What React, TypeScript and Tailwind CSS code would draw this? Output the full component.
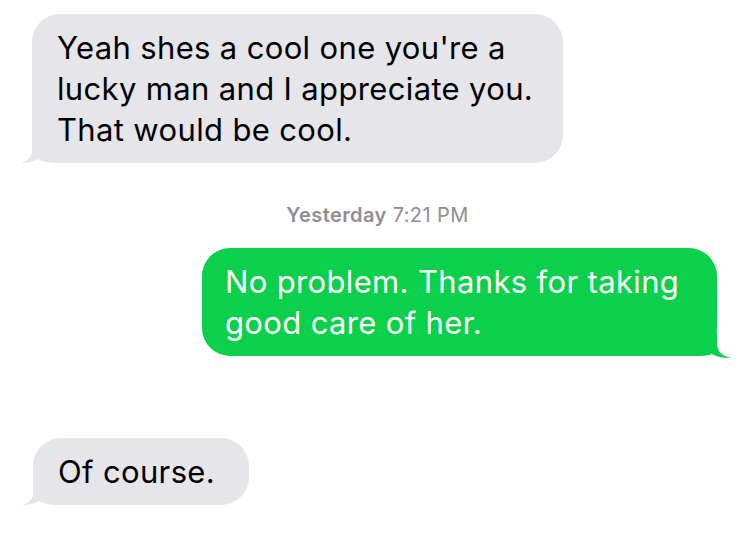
import React from 'react';

const gray = '#e5e5ea';
const green = '#0bd04b';

const TailLeft = ({ color }: { color: string }) => (
	<svg
		className="absolute left-[-13px] bottom-0"
		width="44"
		height="24"
		viewBox="0 0 44 24"
	>
		<path
			d="M13 0 L13 12 C13 18 9 22 1 24 C7 24 13 23 19 20 C24 23 30 24 44 24 L44 0 Z"
			fill={color}
		/>
	</svg>
);

const TailRight = ({ color }: { color: string }) => (
	<svg
		className="absolute right-[-18px] bottom-[-2px]"
		width="44"
		height="26"
		viewBox="0 0 44 26"
	>
		<path
			d="M26 0 L26 12 C26 19 31 24 40 26 C32 26 26 25 21 22 C16 24 10 24 0 24 L0 0 Z"
			fill={color}
		/>
	</svg>
);

export default function App() {
	return (
		<div className="w-[750px] h-[533px] bg-white overflow-hidden flex flex-col pt-[14px] font-['Inter',sans-serif] antialiased">
			{/* received */}
			<div className="relative ml-[32px] w-[531px] rounded-[28px] bg-[#e5e5ea] pl-[25px] py-[13px] text-[31px] tracking-[0.35px] leading-[41px] text-black whitespace-nowrap">
				<TailLeft color={gray} />
				<div className="relative">
					Yeah shes a cool one you're a
					<br />
					lucky man and I appreciate you.
					<br />
					That would be cool.
				</div>
			</div>

			<div className="mt-[41px] h-[22px] leading-[22px] pl-[5px] text-center text-[20px] tracking-[0.4px] text-[#8e8e93]">
				<span className="font-semibold">Yesterday</span> 7:21 PM
			</div>

			{/* sent */}
			<div className="relative mt-[22px] ml-[202px] w-[515px] rounded-[28px] bg-[#0bd04b] pl-[23px] py-[13px] text-[31px] tracking-[0.35px] leading-[41px] text-white whitespace-nowrap">
				<TailRight color={green} />
				<div className="relative">
					No problem. Thanks for taking
					<br />
					good care of her.
				</div>
			</div>

			<div className="relative mt-[82px] ml-[33px] w-[216px] rounded-[28px] bg-[#e5e5ea] pl-[25px] py-[13px] text-[31px] tracking-[0.35px] leading-[41px] text-black whitespace-nowrap">
				<TailLeft color={gray} />
				<div className="relative">Of course.</div>
			</div>
		</div>
	);
}
